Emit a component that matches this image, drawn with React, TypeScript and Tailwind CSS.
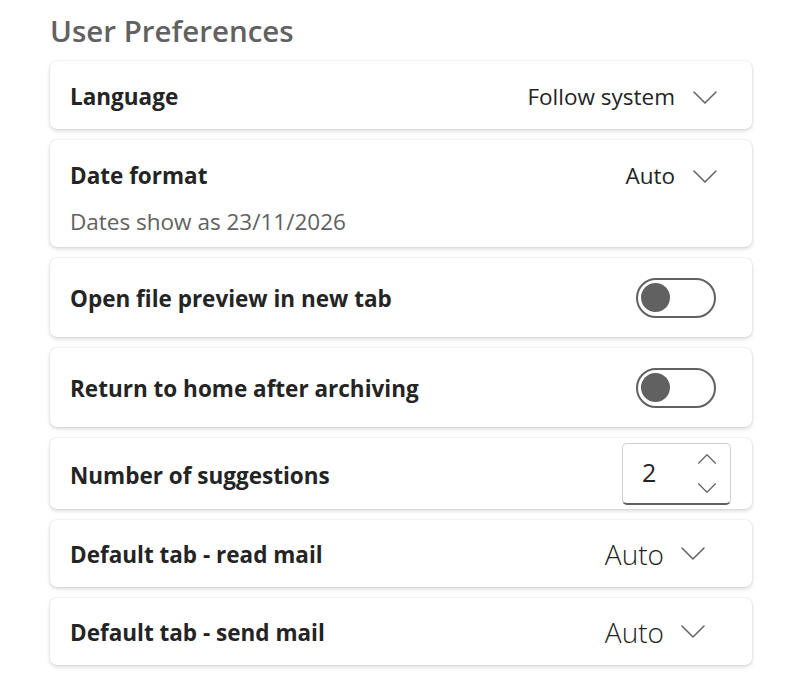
import { useState } from 'react';

const font = { fontFamily: '"Open Sans", "Noto Sans", sans-serif' };

function Chevron({ className = '' }: { className?: string }) {
  return (
    <svg viewBox="0 0 24 13" className={className} fill="none" stroke="#616161" strokeWidth="1.5" strokeLinecap="round" strokeLinejoin="round">
      <path d="M1 1l11 11L23 1" />
    </svg>
  );
}

function Toggle({ on, onClick }: { on: boolean; onClick: () => void }) {
  return (
    <button
      onClick={onClick}
      className="w-[80px] h-[40px] rounded-full border-2 border-[#616161] flex items-center px-[3px]"
    >
      <span className={`block w-[29px] h-[29px] rounded-full bg-[#616161] ${on ? 'ml-auto' : ''}`} />
    </button>
  );
}

function Card({ children, className = '' }: { children: React.ReactNode; className?: string }) {
  return (
    <div className={`bg-white rounded-[7px] shadow-[0_0_2px_rgba(0,0,0,0.14),0_2px_4px_rgba(0,0,0,0.14)] px-5 ${className}`}>
      {children}
    </div>
  );
}

export default function App() {
  const [preview, setPreview] = useState(false);
  const [home, setHome] = useState(false);
  const [count, setCount] = useState(2);

  return (
    <div className="w-[800px] h-[680px] bg-white pl-[50px] pt-[11px]" style={font}>
      <h1 className="text-[29.5px] leading-[40px] font-semibold text-[#616161] mb-[10px]">User Preferences</h1>

      <div className="w-[702px] flex flex-col gap-[11px]">
        <Card className="h-[68px] flex items-center justify-between pt-[4px]">
          <span className="text-[22.5px] font-bold text-[#242424]">Language</span>
          <div className="flex items-center gap-[18px] pr-[15px]">
            <span className="text-[22.5px] text-[#242424]">Follow system</span>
            <Chevron className="w-[24px] h-[13px]" />
          </div>
        </Card>

        <Card className="h-[107px] pt-[20px]">
          <div className="flex items-center justify-between h-[32px]">
            <span className="text-[22.5px] font-bold text-[#242424]">Date format</span>
            <div className="flex items-center gap-[18px] pr-[15px]">
              <span className="text-[22.5px] text-[#242424]">Auto</span>
              <Chevron className="w-[24px] h-[13px]" />
            </div>
          </div>
          <p className="text-[22.5px] leading-[32px] text-[#616161] mt-[14px]">Dates show as 23/11/2026</p>
        </Card>

        <Card className="h-[79px] flex items-center justify-between">
          <span className="text-[22.5px] font-bold text-[#242424] pt-[3px]">Open file preview in new tab</span>
          <div className="pr-[16px]">
            <Toggle on={preview} onClick={() => setPreview(!preview)} />
          </div>
        </Card>

        <Card className="h-[79px] flex items-center justify-between">
          <span className="text-[22.5px] font-bold text-[#242424] pt-[3px]">Return to home after archiving</span>
          <div className="pr-[16px]">
            <Toggle on={home} onClick={() => setHome(!home)} />
          </div>
        </Card>

        <Card className="h-[71px] flex items-center justify-between">
          <span className="text-[22.5px] font-bold text-[#242424] pt-[4px]">Number of suggestions</span>
          <div className="w-[109px] h-[62px] mr-[1px] rounded-[5px] border border-[#d1d1d1] border-b-2 border-b-[#616161] flex items-center justify-between pl-[19px] pr-[13px]">
            <span className="text-[25px] text-[#242424]">{count}</span>
            <div className="flex flex-col gap-[19px]">
              <button onClick={() => setCount(count + 1)}>
                <Chevron className="w-[20px] h-[10px] rotate-180" />
              </button>
              <button onClick={() => setCount(Math.max(0, count - 1))}>
                <Chevron className="w-[20px] h-[10px]" />
              </button>
            </div>
          </div>
        </Card>

        <Card className="h-[67px] flex items-center justify-between">
          <span className="text-[22.5px] font-bold text-[#242424] pt-[2px]">Default tab - read mail</span>
          <div className="flex items-center gap-[17px] pr-[27px]">
            <span className="text-[28px] font-light text-[#242424]">Auto</span>
            <Chevron className="w-[24px] h-[13px]" />
          </div>
        </Card>

        <Card className="h-[67px] flex items-center justify-between">
          <span className="text-[22.5px] font-bold text-[#242424] pt-[2px]">Default tab - send mail</span>
          <div className="flex items-center gap-[17px] pr-[27px]">
            <span className="text-[28px] font-light text-[#242424]">Auto</span>
            <Chevron className="w-[24px] h-[13px]" />
          </div>
        </Card>
      </div>
    </div>
  );
}
